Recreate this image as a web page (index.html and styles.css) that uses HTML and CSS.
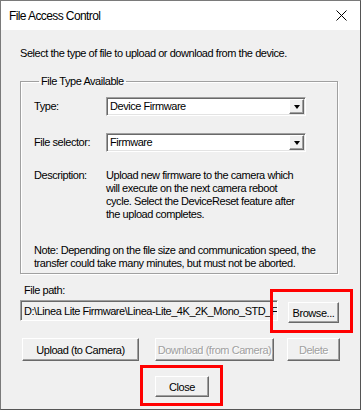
FILE: index.html
```html
<!DOCTYPE html>
<html lang="en">
<head>
  <meta charset="UTF-8" />
  <title>File Access Control</title>
  <link rel="stylesheet" href="styles.css">
</head>
<body>
  <div class="window">
    <div class="titlebar">
      <span class="title">File Access Control</span>
      <svg class="close-x" width="11" height="11" viewBox="0 0 11 11">
        <path d="M0.5 0.5 L10.5 10.5 M10.5 0.5 L0.5 10.5" stroke="#000" stroke-width="1" fill="none"/>
      </svg>
    </div>

    <div class="content">
      <p class="intro">Select the type of file to upload or download from the device.</p>

      <fieldset class="group">
        <legend>File Type Available</legend>

        <div class="row">
          <label>Type:</label>
          <div class="combo">
            <span class="combo-text">Device Firmware</span>
            <span class="combo-btn"><span class="arrow"></span></span>
          </div>
        </div>

        <div class="row">
          <label>File selector:</label>
          <div class="combo">
            <span class="combo-text">Firmware</span>
            <span class="combo-btn"><span class="arrow"></span></span>
          </div>
        </div>

        <div class="row desc">
          <label>Description:</label>
          <p>Upload new firmware to the camera which<br>will execute on the next camera reboot<br>cycle. Select the DeviceReset feature after<br>the upload completes.</p>
        </div>

        <p class="note">Note: Depending on the file size and communication speed, the<br>transfer could take many minutes, but must not be aborted.</p>
      </fieldset>

      <div class="path-label">File path:</div>
      <div class="path-row">
        <div class="path-box">D:\Linea Lite Firmware\Linea-Lite_4K_2K_Mono_STD_Fi</div>
        <button class="btn browse">Browse...</button>
        <div class="mark mark-browse"></div>
      </div>

      <div class="action-row">
        <button class="btn upload">Upload (to Camera)</button>
        <button class="btn download" disabled>Download (from Camera)</button>
        <button class="btn delete" disabled>Delete</button>
      </div>

      <div class="close-row">
        <button class="btn close">Close</button>
        <div class="mark mark-close"></div>
      </div>
    </div>
  </div>
</body>
</html>
```

FILE: styles.css
```css
body {
  margin: 0;
  font-family: "Liberation Sans", Arial, sans-serif;
  font-size: 11px;
  letter-spacing: -0.45px;
  color: #000;
  background: #fff;
}

.window {
  width: 361px;
  height: 410px;
  box-sizing: border-box;
  border: 1px solid #7a7a7a;
  border-right-color: #555;
  border-bottom-color: #555;
  background: #f0f0f0;
  display: flex;
  flex-direction: column;
  overflow: hidden;
}

.titlebar {
  flex-shrink: 0;
  height: 29px;
  background: #fff;
  display: flex;
  align-items: center;
  justify-content: space-between;
  padding: 0 13px 0 8px;
}
.title {
  font-size: 12px;
  letter-spacing: -0.6px;
  margin-top: 1px;
}
.close-x { margin-top: -1px; }

.content {
  flex: 1;
  padding: 17px 0 0 19px;
  position: relative;
  line-height: 13px;
}

p { margin: 0; }

.intro { margin-bottom: 15px; }

.group {
  width: 318px;
  box-sizing: border-box;
  margin: 0;
  padding: 9px 0 3px 13px;
  border: 1px solid #a0a0a0;
  box-shadow: inset 1px 1px 0 #fff, 1px 1px 0 #fff;
  min-width: 0;
}
.group legend {
  padding: 0 2px;
  margin-left: 5px;
  line-height: 13px;
}

.row {
  display: grid;
  grid-template-columns: 72px 200px;
  align-items: center;
  margin-bottom: 17px;
}
.row.desc {
  align-items: start;
  margin-bottom: 23px;
}

.combo {
  height: 19px;
  box-sizing: border-box;
  background: #fff;
  border: 1px solid #a0a0a0;
  border-right-color: #fff;
  border-bottom-color: #fff;
  box-shadow: inset 1px 1px 0 #696969, inset -1px -1px 0 #e3e3e3;
  display: flex;
  align-items: stretch;
}
.combo-text {
  flex: 1;
  padding: 2px 0 0 3px;
}
.combo-btn {
  width: 15px;
  margin: 1px 1px 1px 0;
  background: #f0f0f0;
  box-sizing: border-box;
  border: 1px solid #fff;
  border-right-color: #696969;
  border-bottom-color: #696969;
  box-shadow: inset -1px -1px 0 #a0a0a0;
  display: flex;
  align-items: center;
  justify-content: center;
}
.arrow {
  width: 0;
  height: 0;
  border-left: 3.5px solid transparent;
  border-right: 3.5px solid transparent;
  border-top: 4px solid #000;
  margin-top: 1px;
}

.path-label {
  margin: 10px 0 3px 4px;
}
.path-row {
  display: flex;
  align-items: flex-start;
  position: relative;
}
.path-box {
  width: 258px;
  height: 21px;
  box-sizing: border-box;
  padding: 4px 0 0 3px;
  white-space: nowrap;
  overflow: hidden;
  background: #f0f0f0;
  border: 1px solid #a0a0a0;
  border-right-color: #fff;
  border-bottom-color: #fff;
  box-shadow: inset 1px 1px 0 #696969;
}

.btn {
  font-family: inherit;
  font-size: 11px;
  letter-spacing: inherit;
  white-space: nowrap;
  color: #000;
  height: 21px;
  padding: 0;
  background: #f0f0f0;
  box-sizing: border-box;
  border: 1px solid #fff;
  border-right-color: #696969;
  border-bottom-color: #696969;
  box-shadow: inset -1px -1px 0 #a0a0a0;
}
.btn:disabled {
  color: #a0a0a0;
  text-shadow: 1px 1px 0 #fff;
}

.browse {
  width: 51px;
  margin: 2px 0 0 10px;
}

.action-row {
  display: flex;
  margin: 15px 0 0 2px;
}
.action-row .btn { height: 23px; }
.upload { width: 117px; }
.download { width: 119px; margin-left: 16px; }
.delete { width: 53px; margin-left: 13px; }

.close-row {
  position: relative;
  margin: 15px 0 0 135px;
}
.close { width: 54px; }

.mark {
  position: absolute;
  border: 3px solid #f00;
  box-sizing: border-box;
}
.mark-browse {
  left: 250px;
  top: -11px;
  width: 83px;
  height: 44px;
}
.mark-close {
  left: -15px;
  top: -11px;
  width: 83px;
  height: 41px;
}
```
